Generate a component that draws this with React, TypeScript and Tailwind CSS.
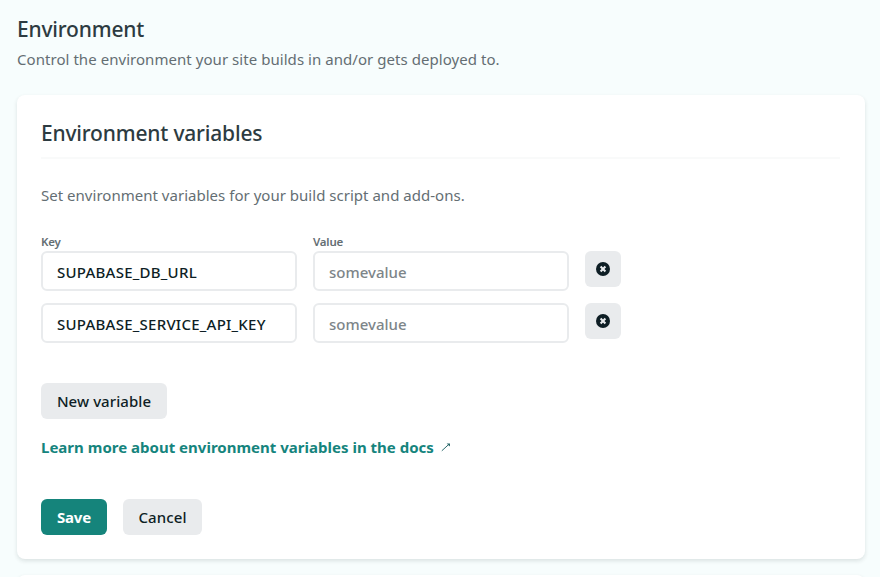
import React from "react";

const variables = [{ key: "SUPABASE_DB_URL" }, { key: "SUPABASE_SERVICE_API_KEY" }];

const inputClass =
  "block h-10 w-64 rounded-md border-2 border-[#e9ebed] bg-white px-3.5 pt-0.5 text-[15px] font-medium text-[#0e1e25] outline-none placeholder:text-[#7d8589] placeholder:opacity-100";

function RemoveIcon() {
  return (
    <svg width="14" height="14" viewBox="0 0 14 14">
      <circle cx="7" cy="7" r="7" fill="#0e1e25" />
      <path d="M4.6 4.6l4.8 4.8M9.4 4.6L4.6 9.4" stroke="#e9ebed" strokeWidth="2.1" />
    </svg>
  );
}

function ArrowIcon() {
  return (
    <svg width="10" height="10" viewBox="0 0 10 10" fill="none" stroke="#2d6b6d" strokeWidth="1">
      <path d="M0.8 8.8L8 2.2" />
      <path d="M5.6 1.4H9V4.6L7.8 3.4z" fill="#2d6b6d" stroke="none" />
    </svg>
  );
}

export default function App() {
  return (
    <div className="h-[577px] w-[880px] overflow-hidden bg-[#f7fdfd] pl-[17px] pr-[15px] font-['Noto_Sans',sans-serif]">
      <header className="h-[95px] pt-[15px]">
        <h1 className="h-[29px] text-[21px] leading-[29px] font-medium tracking-[-0.19px] whitespace-nowrap text-[#2d3b41]">
          Environment
        </h1>
        <p className="mt-[3px] text-[15px] leading-6 tracking-[0.05px] whitespace-nowrap text-[#646e73]">
          Control the environment your site builds in and/or gets deployed to.
        </p>
      </header>
      <section className="h-[464px] rounded-lg bg-white px-6 pt-[23px] shadow-[0_2px_4px_rgba(14,30,37,0.12)]">
        <h2 className="mr-px h-[41px] border-b-2 border-[#f9fafa] text-[21px] leading-[30px] font-medium tracking-[-0.19px] whitespace-nowrap text-[#2d3b41]">
          Environment variables
        </h2>
        <p className="mt-6 text-[15px] leading-6 tracking-[0.02px] whitespace-nowrap text-[#646e73]">
          Set environment variables for your build script and add-ons.
        </p>
        <div className="mt-[26px] flex h-[18px] gap-4 text-[11.5px] leading-[18px] font-semibold tracking-[-0.2px] text-[#646e73]">
          <span className="w-64">Key</span>
          <span>Value</span>
        </div>
        <div className="flex flex-col gap-3">
          {variables.map((item) => (
            <div key={item.key} className="flex items-start gap-4">
              <input className={`${inputClass} tracking-[0.25px]`} defaultValue={item.key} aria-label="Key" />
              <input className={inputClass} placeholder="somevalue" aria-label="Value" />
              <button className="flex size-9 items-center justify-center rounded-md bg-[#e9ebed]" aria-label="Remove">
                <RemoveIcon />
              </button>
            </div>
          ))}
        </div>
        <button className="mt-10 block h-9 w-[126px] rounded-md bg-[#e9ebed] text-[15px] font-medium tracking-[0.07px] whitespace-nowrap text-[#0e1e25]">
          New variable
        </button>
        <a className="mt-4 flex h-6 items-center gap-[7px] text-[15px] font-bold tracking-[0.01px] whitespace-nowrap text-[#15847d]">
          <span>Learn more about environment variables in the docs</span>
          <ArrowIcon />
        </a>
        <div className="mt-10 flex gap-4">
          <button className="h-9 w-[66px] rounded-md bg-[#15847b] text-[15px] font-bold tracking-[-0.2px] text-white">Save</button>
          <button className="h-9 w-[79px] rounded-md bg-[#e9ebed] text-[15px] font-medium tracking-[0.1px] text-[#0e1e25]">Cancel</button>
        </div>
      </section>
      <section className="mt-4 h-20 rounded-lg bg-white shadow-[0_2px_4px_rgba(14,30,37,0.12)]" />
    </div>
  );
}
